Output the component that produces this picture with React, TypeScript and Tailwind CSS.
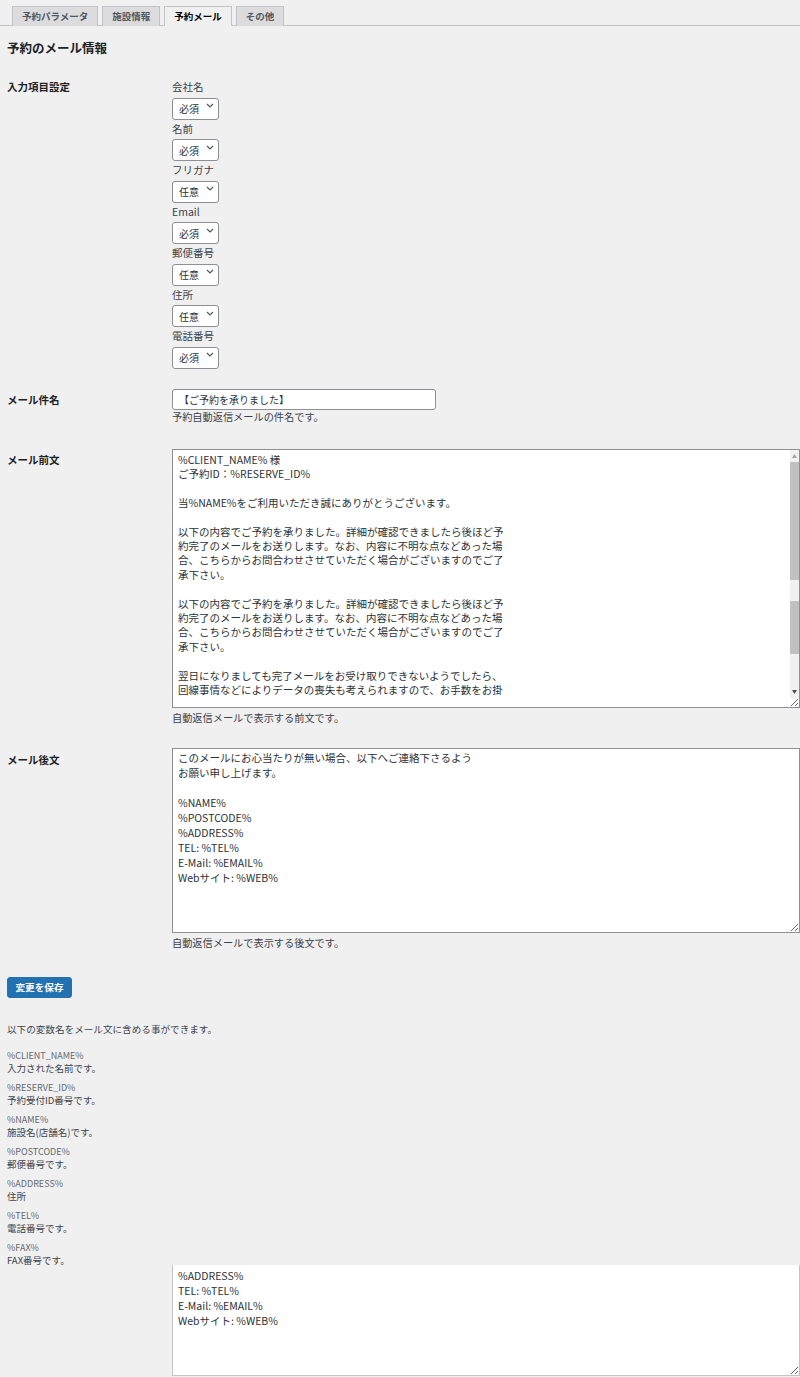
import React from 'react';

const font = { fontFamily: '"Noto Sans CJK JP", "Noto Sans", sans-serif' };

const fields: [string, string][] = [
  ['会社名', '必須'],
  ['名前', '必須'],
  ['フリガナ', '任意'],
  ['Email', '必須'],
  ['郵便番号', '任意'],
  ['住所', '任意'],
  ['電話番号', '必須'],
];

const vars: [string, string][] = [
  ['%CLIENT_NAME%', '入力された名前です。'],
  ['%RESERVE_ID%', '予約受付ID番号です。'],
  ['%NAME%', '施設名(店舗名)です。'],
  ['%POSTCODE%', '郵便番号です。'],
  ['%ADDRESS%', '住所'],
  ['%TEL%', '電話番号です。'],
  ['%FAX%', 'FAX番号です。'],
];

const preText = `%CLIENT_NAME% 様
ご予約ID：%RESERVE_ID%

当%NAME%をご利用いただき誠にありがとうございます。

以下の内容でご予約を承りました。詳細が確認できましたら後ほど予
約完了のメールをお送りします。なお、内容に不明な点などあった場
合、こちらからお問合わせさせていただく場合がございますのでご了
承下さい。

以下の内容でご予約を承りました。詳細が確認できましたら後ほど予
約完了のメールをお送りします。なお、内容に不明な点などあった場
合、こちらからお問合わせさせていただく場合がございますのでご了
承下さい。

翌日になりましても完了メールをお受け取りできないようでしたら、
回線事情などによりデータの喪失も考えられますので、お手数をお掛`;

const postText = `このメールにお心当たりが無い場合、以下へご連絡下さるよう
お願い申し上げます。

%NAME%
%POSTCODE%
%ADDRESS%
TEL: %TEL%
E-Mail: %EMAIL%
Webサイト: %WEB%`;

const extraText = `%ADDRESS%
TEL: %TEL%
E-Mail: %EMAIL%
Webサイト: %WEB%`;

function Tab({ label, active }: { label: string; active?: boolean }) {
  return (
    <div
      className={
        active
          ? 'h-[20px] px-[9px] flex items-center border border-b-0 border-[#c3c4c7] bg-[#f0f0f1] text-[9.5px] font-bold text-[#000] -mb-px'
          : 'h-[20px] px-[9px] flex items-center border border-b-0 border-[#c3c4c7] bg-[#dcdcde] text-[9.5px] font-bold text-[#50575e] -mb-px'
      }
    >
      {label}
    </div>
  );
}

function SmallSelect({ value }: { value: string }) {
  return (
    <div className="relative w-[47px] h-[22px]">
      <select
        defaultValue={value}
        style={font}
        className="appearance-none w-full h-full border border-[#8c8f94] rounded-[3px] bg-white pl-[6px] text-[10px] text-[#2c3338] outline-none"
      >
        <option>必須</option>
        <option>任意</option>
      </select>
      <svg className="absolute right-[5px] top-[9px] pointer-events-none" width="8" height="5" viewBox="0 0 8 5">
        <path d="M1 1l3 3 3-3" fill="none" stroke="#50575e" strokeWidth="1.2" />
      </svg>
    </div>
  );
}

export default function App() {
  return (
    <div className="min-h-screen w-[800px] bg-[#f0f0f1] text-[#3c434a] overflow-hidden" style={font}>
      {/* Tabs */}
      <div className="pt-[6px] pl-[12px] flex gap-[4px] border-b border-[#c3c4c7]">
        <Tab label="予約パラメータ" />
        <Tab label="施設情報" />
        <Tab label="予約メール" active />
        <Tab label="その他" />
      </div>

      <h2 className="mt-[14px] pl-[7px] text-[12.5px] font-bold text-[#1d2327] leading-[16px]">予約のメール情報</h2>

      {/* 入力項目設定 */}
      <div className="flex mt-[24px]">
        <div className="w-[172px] shrink-0 pl-[7px] text-[10.5px] font-bold text-[#1d2327] leading-[14px]">入力項目設定</div>
        <div className="flex flex-col">
          {fields.map(([label, val]) => (
            <div key={label} className="mb-[5.5px]">
              <div className="text-[10.5px] leading-[14px] text-[#3c434a]">{label}</div>
              <SmallSelect value={val} />
            </div>
          ))}
        </div>
      </div>

      {/* メール件名 */}
      <div className="flex mt-[18px]">
        <div className="w-[172px] shrink-0 pl-[7px] pt-[4px] text-[10.5px] font-bold text-[#1d2327] leading-[14px]">メール件名</div>
        <div className="flex flex-col">
          <input
            defaultValue="【ご予約を承りました】"
            style={font}
            className="w-[264px] h-[21px] border border-[#8c8f94] rounded-[3px] bg-white px-[6px] text-[10px] text-[#2c3338] outline-none"
          />
          <div className="text-[10.2px] leading-[14px] text-[#3c434a]">予約自動返信メールの件名です。</div>
        </div>
      </div>

      {/* メール前文 */}
      <div className="flex mt-[25px]">
        <div className="w-[172px] shrink-0 pl-[7px] pt-[4px] text-[10.5px] font-bold text-[#1d2327] leading-[14px]">メール前文</div>
        <div className="flex flex-col flex-1">
          <div className="relative">
            <textarea
              defaultValue={preText}
              style={font}
              className="block w-full h-[259px] border border-[#8c8f94] bg-white pl-[5px] pr-[14px] pt-[3px] text-[10.5px] leading-[14.4px] text-[#2c3338] overflow-hidden resize-y outline-none"
            />
            {/* scrollbar */}
            <div className="absolute right-[1px] top-[1px] bottom-[10px] w-[9px] bg-[#f1f1f1] flex flex-col items-center">
              <div className="h-[12px] flex items-center justify-center">
                <svg width="5" height="4" viewBox="0 0 5 4"><path d="M2.5 0L5 4H0z" fill="#a3a3a3" /></svg>
              </div>
              <div className="w-full h-[118px] bg-[#c1c1c1]" />
              <div className="w-full h-[21px]" />
              <div className="w-full h-[53px] bg-[#c1c1c1]" />
              <div className="flex-1" />
              <div className="h-[12px] flex items-center justify-center">
                <svg width="5" height="4" viewBox="0 0 5 4"><path d="M0 0H5L2.5 4z" fill="#505050" /></svg>
              </div>
            </div>
          </div>
          <div className="mt-[3px] text-[10.2px] leading-[14px] text-[#3c434a]">自動返信メールで表示する前文です。</div>
        </div>
      </div>

      {/* メール後文 */}
      <div className="flex mt-[23px]">
        <div className="w-[172px] shrink-0 pl-[7px] pt-[5px] text-[10.5px] font-bold text-[#1d2327] leading-[14px]">メール後文</div>
        <div className="flex flex-col flex-1">
          <textarea
            defaultValue={postText}
            style={font}
            className="block w-full h-[185px] border border-[#8c8f94] bg-white pl-[5px] pt-[1px] text-[10.5px] leading-[15.1px] text-[#2c3338] overflow-hidden resize-y outline-none"
          />
          <div className="mt-[3px] text-[10.2px] leading-[14px] text-[#3c434a]">自動返信メールで表示する後文です。</div>
        </div>
      </div>

      {/* Save */}
      <div className="mt-[27px] pl-[7px]">
        <button
          style={font}
          className="h-[21px] w-[65px] rounded-[3px] bg-[#2271b1] border border-[#2271b1] text-white text-[9.6px] font-bold flex items-center justify-center"
        >
          変更を保存
        </button>
      </div>

      {/* Variables */}
      <div className="mt-[24px] pl-[7px] text-[9.6px] leading-[14px] text-[#3c434a]">以下の変数名をメール文に含める事ができます。</div>
      <div className="mt-[14px] pl-[7px] flex flex-col gap-[7px]">
        {vars.map(([name, desc]) => (
          <div key={name}>
            <div className="text-[9px] leading-[12px] text-[#646970]">{name}</div>
            <div className="text-[9.5px] leading-[13px] text-[#3c434a]">{desc}</div>
          </div>
        ))}
      </div>

      <div className="ml-[172px] -mt-[2px]">
        <textarea
          defaultValue={extraText}
          style={font}
          className="block w-full h-[111px] border border-[#c3c4c7] border-t-0 bg-white pl-[5px] pt-[3px] text-[10.5px] leading-[15px] text-[#2c3338] overflow-hidden resize-y outline-none"
        />
      </div>
    </div>
  );
}
